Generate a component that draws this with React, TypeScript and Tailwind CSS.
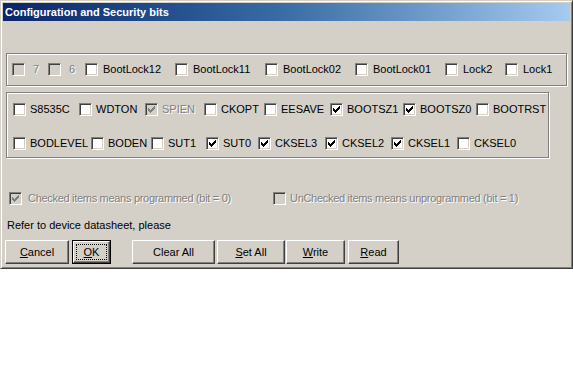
import React from "react";

const CHECK_COLS: [number, number][] = [
  [3, 5],
  [4, 6],
  [5, 7],
  [6, 6],
  [7, 5],
  [8, 4],
  [9, 3],
];

function Box({ checked = false, disabled = false }: { checked?: boolean; disabled?: boolean }) {
  return (
    <span
      className={`relative block w-[13px] h-[13px] shrink-0 border border-t-[#808080] border-l-[#808080] border-b-white border-r-white shadow-[inset_1px_1px_0_#404040,inset_-1px_-1px_0_#d4d0c8] ${
        disabled ? "bg-[#d4d0c8]" : "bg-white"
      }`}
    >
      {checked && (
        <svg className="absolute -left-px -top-px" width={13} height={13} viewBox="0 0 13 13" shapeRendering="crispEdges">
          {CHECK_COLS.map(([x, y]) => (
            <rect key={x} x={x} y={y} width={1} height={3} fill={disabled ? "#808080" : "#000"} />
          ))}
        </svg>
      )}
    </span>
  );
}

function Item({
  label,
  w,
  checked,
  disabled,
  gap = "gap-[4px]",
  tight = false,
}: {
  label: string;
  w: string;
  checked?: boolean;
  disabled?: boolean;
  gap?: string;
  tight?: boolean;
}) {
  return (
    <div className={`flex items-center ${gap} ${w} shrink-0`}>
      <Box checked={checked} disabled={disabled} />
      <span
        className={`leading-[13px] whitespace-nowrap ${tight ? "tracking-[-0.3px]" : ""} ${
          disabled ? "text-[#808080] [text-shadow:1px_1px_0_#fff]" : "text-black"
        }`}
      >
        {label}
      </span>
    </div>
  );
}

function Btn({ w, children }: { w: string; children: React.ReactNode }) {
  return (
    <div
      className={`${w} h-[24px] shrink-0 bg-[#d4d0c8] border border-t-white border-l-white border-r-[#404040] border-b-[#404040] shadow-[inset_-1px_-1px_0_#808080] flex items-center justify-center text-black leading-[13px]`}
    >
      {children}
    </div>
  );
}

export default function App() {
  return (
    <div className="font-['Liberation_Sans',Arial,sans-serif] text-[11px] bg-white w-[573px] h-[384px]">
      <div className="w-[573px] h-[269px] bg-[#d4d0c8] border border-t-[#d4d0c8] border-l-[#d4d0c8] border-r-[#404040] border-b-[#404040] shadow-[inset_1px_1px_0_#fff,inset_-1px_-1px_0_#808080] p-[2px] flex flex-col">
        <div className="h-[18px] bg-linear-to-r from-[#0a246a] via-[#3a6ea5] to-[#a6caf0] flex items-center pl-[2px]">
          <span className="text-white font-bold text-[11px] leading-[13px]">Configuration and Security bits</span>
        </div>

        {/* group 1 */}
        <div className="mt-[32px] ml-[3px] w-[561px] h-[33px] border border-[#808080] shadow-[inset_1px_1px_0_#fff,1px_1px_0_#fff] flex items-center pl-[5px]">
          <Item label="7" w="w-[36px]" disabled gap="gap-[8px]" />
          <Item label="6" w="w-[37px]" disabled gap="gap-[8px]" />
          <Item label="BootLock12" w="w-[90px]" gap="gap-[5px]" />
          <Item label="BootLock11" w="w-[90px]" gap="gap-[5px]" />
          <Item label="BootLock02" w="w-[90px]" gap="gap-[5px]" />
          <Item label="BootLock01" w="w-[90px]" gap="gap-[5px]" />
          <Item label="Lock2" w="w-[60px]" gap="gap-[5px]" />
          <Item label="Lock1" w="w-[50px]" gap="gap-[5px]" />
        </div>

        {/* group 2 */}
        <div className="mt-[6px] ml-[3px] w-[543px] h-[66px] border border-[#808080] shadow-[inset_1px_1px_0_#fff,1px_1px_0_#fff] flex flex-col gap-[21px] pt-[10px] pl-[6px]">
          <div className="flex items-center h-[13px]">
            <Item label="S8535C" w="w-[66px]" />
            <Item label="WDTON" w="w-[66px]" />
            <Item label="SPIEN" w="w-[59px]" checked disabled />
            <Item label="CKOPT" w="w-[60px]" />
            <Item label="EESAVE" w="w-[66px]" />
            <Item label="BOOTSZ1" w="w-[73px]" checked />
            <Item label="BOOTSZ0" w="w-[73px]" checked />
            <Item label="BOOTRST" w="w-[66px]" />
          </div>
          <div className="flex items-center h-[13px]">
            <Item label="BODLEVEL" w="w-[78px]" />
            <Item label="BODEN" w="w-[60px]" />
            <Item label="SUT1" w="w-[55px]" />
            <Item label="SUT0" w="w-[52px]" checked />
            <Item label="CKSEL3" w="w-[67px]" checked />
            <Item label="CKSEL2" w="w-[66px]" checked />
            <Item label="CKSEL1" w="w-[66px]" checked />
            <Item label="CKSEL0" w="w-[60px]" />
          </div>
        </div>

        {/* legend */}
        <div className="mt-[34px] ml-[6px] flex items-center h-[13px]">
          <Item label="Checked items means programmed (bit = 0)" w="w-[264px]" checked disabled gap="gap-[6px]" tight />
          <Item label="UnChecked items means unprogrammed (bit = 1)" w="w-[260px]" disabled gap="gap-[4px]" tight />
        </div>

        <div className="mt-[14px] ml-[4px] leading-[13px] text-black">Refer to device datasheet, please</div>

        {/* buttons */}
        <div className="mt-[8px] ml-[2px] flex items-center">
          <Btn w="w-[64px]">
            <span>
              <span className="underline">C</span>ancel
            </span>
          </Btn>
          <div className="ml-[3px] w-[39px] h-[24px] border border-black flex">
            <div className="flex-1 bg-[#d4d0c8] border border-t-white border-l-white border-r-[#404040] border-b-[#404040] shadow-[inset_-1px_-1px_0_#808080] flex items-center justify-center p-[2px]">
              <span className="w-full h-full border border-dotted border-black flex items-center justify-center leading-[13px]">
                <span>
                  <span className="underline">O</span>K
                </span>
              </span>
            </div>
          </div>
          <div className="ml-[21px]">
            <Btn w="w-[83px]">Clear All</Btn>
          </div>
          <div className="ml-[2px]">
            <Btn w="w-[68px]">
              <span>
                <span className="underline">S</span>et All
              </span>
            </Btn>
          </div>
          <div className="ml-[1px]">
            <Btn w="w-[59px]">
              <span>
                <span className="underline">W</span>rite
              </span>
            </Btn>
          </div>
          <div className="ml-[3px]">
            <Btn w="w-[51px]">
              <span>
                <span className="underline">R</span>ead
              </span>
            </Btn>
          </div>
        </div>
      </div>
    </div>
  );
}
